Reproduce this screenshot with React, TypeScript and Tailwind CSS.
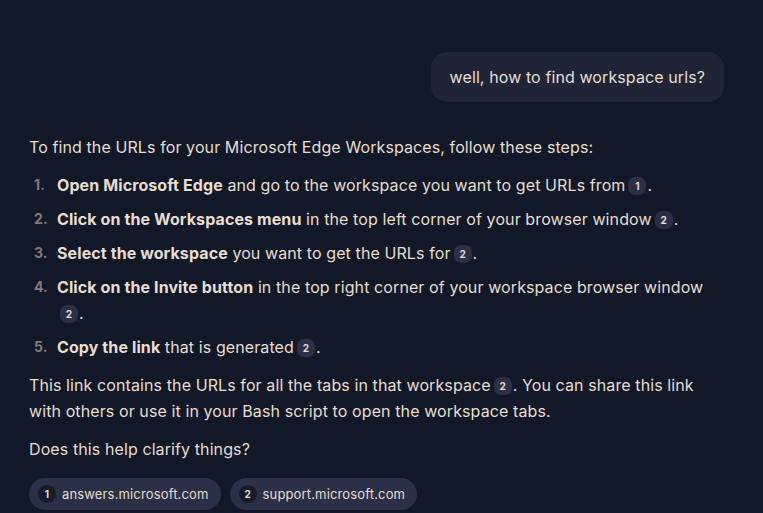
import React from "react";

const Cite = ({ n }: { n: number }) => (
  <span className="ml-[3px] mr-[1px] inline-flex h-[18px] w-[18px] items-center justify-center rounded-[7px] bg-[#2a3045] align-[1px] text-[10px] font-bold leading-none tracking-normal text-[#e6dccf]">
    {n}
  </span>
);

const items: { b: string; rest: React.ReactNode }[] = [
  { b: "Open Microsoft Edge", rest: <> and go to the workspace you want to get URLs from<Cite n={1} />.</> },
  { b: "Click on the Workspaces menu", rest: <> in the top left corner of your browser window<Cite n={2} />.</> },
  { b: "Select the workspace", rest: <> you want to get the URLs for<Cite n={2} />.</> },
  { b: "Click on the Invite button", rest: <> in the top right corner of your workspace browser window <Cite n={2} />.</> },
  { b: "Copy the link", rest: <> that is generated<Cite n={2} />.</> },
];

export default function App() {
  return (
    <div
      className="h-[513px] w-[763px] overflow-hidden bg-[#111827] text-[16px] leading-[26px] tracking-[0.1px] text-[#e8ddd0]"
      style={{ fontFamily: "Inter, 'Noto Sans', sans-serif" }}
    >
      <div className="flex justify-end pr-[39px] pt-[52px]">
        <div className="rounded-[16px] bg-[#1f2437] px-[19px] py-[12px]">well, how to find workspace urls?</div>
      </div>
      <div className="px-[29px] pt-[32px]">
        <p>To find the URLs for your Microsoft Edge Workspaces, follow these steps:</p>
        <ol className="mt-[12px] flex flex-col gap-[8px]">
          {items.map((it, i) => (
            <li key={i} className="flex">
              <span className="w-[28px] shrink-0 pl-[5px] text-[14px] font-bold text-[#857a7c]">{i + 1}.</span>
              <span className="pr-[12px]">
                <strong className="font-bold">{it.b}</strong>
                {it.rest}
              </span>
            </li>
          ))}
        </ol>
        <p className="mt-[12px] pr-[40px]">
          This link contains the URLs for all the tabs in that workspace<Cite n={2} />. You can share this link with others or use it in your Bash script to open the workspace tabs.
        </p>
        <p className="mt-[12px]">Does this help clarify things?</p>
        <div className="mt-[16px] flex gap-[9px]">
          {["answers.microsoft.com", "support.microsoft.com"].map((s, i) => (
            <div key={i} className="flex h-[32px] items-center gap-[6px] rounded-full bg-[#2a3045] pl-[9px] pr-[12px] text-[13px] tracking-[0.15px]">
              <span className="flex h-[18px] w-[18px] items-center justify-center rounded-full bg-[#161b29] text-[10px] font-bold tracking-normal">{i + 1}</span>
              {s}
            </div>
          ))}
        </div>
      </div>
    </div>
  );
}
